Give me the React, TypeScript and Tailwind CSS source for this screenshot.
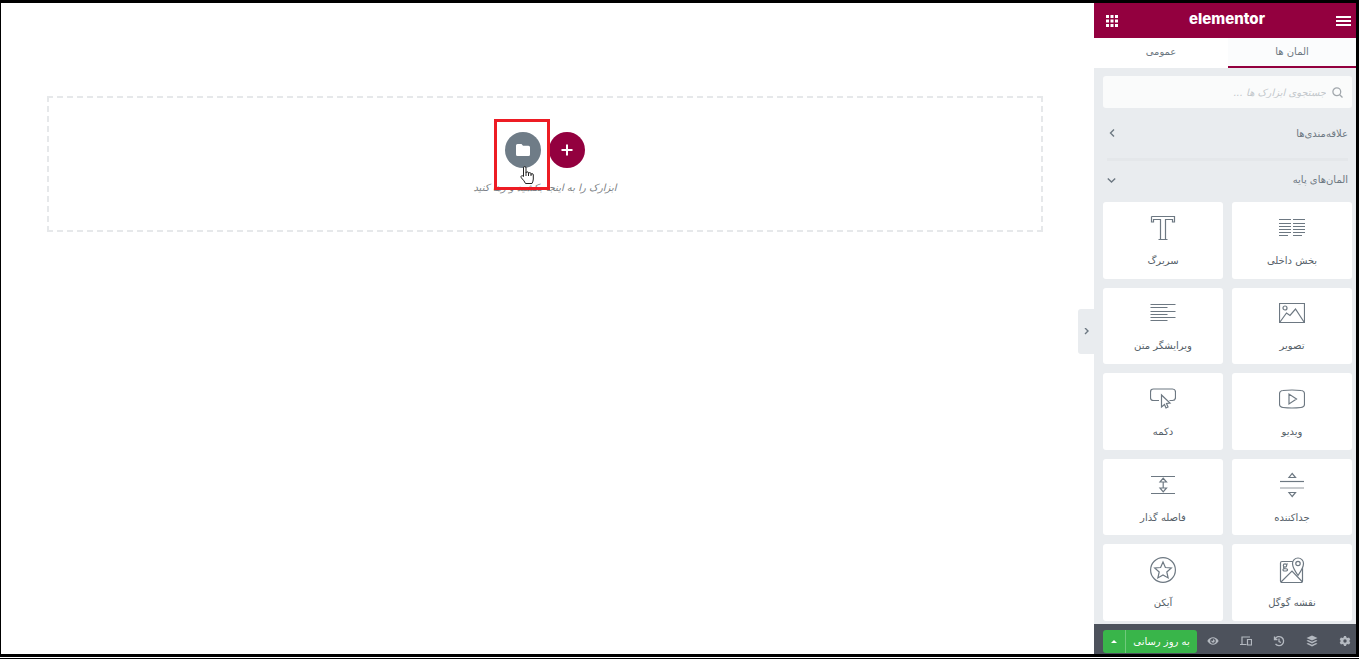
import React from 'react';

const widgets = [
  {
    title: 'بخش داخلی',
    icon: (
      <path d="M0 4.500h12M0 8.500h12M0 11.500h12M0 14.500h12M0 17.500h12M0 20.500h9M14 4.500h12M14 8.500h12M14 11.500h12M14 14.500h12M14 17.500h12M14 20.500h9" />
    ),
  },
  {
    title: 'سربرگ',
    icon: <path d="M1.500 1.500h23v5.500h-2V4.500h-7v20M1.500 1.500v5.500h2V4.500h7v20M8.500 24.500h9" />,
  },
  {
    title: 'تصویر',
    icon: (
      <>
        <path d="M.5 3.500h25v19H.5zM1 22l6.500-9 3.500 2.500 5.500-6.500L25 22" />
        <circle cx="6" cy="8" r="2" />
      </>
    ),
  },
  {
    title: 'ویرایشگر متن',
    icon: <path d="M.5 4.500h25M.5 7.500h17M.5 11.500h25M.5 14.500h17M.5 17.500h25M.5 20.500h17" />,
  },
  {
    title: 'ویدیو',
    icon: (
      <path d="M4 4.500q9-1 18 0q3.500.3 3.500 3.500v10q0 3.200-3.500 3.500q-9 1-18 0q-3.500-.3-3.500-3.500V8q0-3.200 3.500-3.500zM10 8v10l7.500-5z" />
    ),
  },
  {
    title: 'دکمه',
    icon: (
      <>
        <path d="M9 14.500H3.500Q.5 14.500.5 11.500V6q0-3 3-3h19q3 0 3 3v5.500q0 3-3 3h-3" />
        <path d="M11.500 9v12l3-2.500 1.500 3.500 2-1-1.500-3.500 3.500-.5z" />
      </>
    ),
  },
  {
    title: 'جداکننده',
    icon: (
      <>
        <path d="M1 9.500h24" />
        <path d="M1 16h24" stroke="#c8cbce" strokeWidth="2" />
        <path d="M10 5.500h6.500L13.200 1.500zM10 20.500h6.500l-3.300 4z" />
      </>
    ),
  },
  {
    title: 'فاصله گذار',
    icon: <path d="M1 4.500h24M1 21.500h24M10 10h6.500l-3.300-3.800zM10 16h6.500l-3.300 3.800zM13.200 10v6" />,
  },
  {
    title: 'نقشه گوگل',
    icon: (
      <>
        <rect x="1.500" y="4.500" width="22" height="21" rx="1.500" />
        <path d="M2 25L13 14l10.500 11" />
        <path d="M19 18.500Q13.500 10.500 13.500 6.500a5.500 5.500 0 0 1 11 0q0 4-5.500 12z" fill="#fff" />
        <circle cx="19" cy="6.500" r="2.200" />
        <circle cx="6" cy="8.500" r="1.700" />
        <path d="M7.500 7h1.500M5 10q-1 1 .5 1.500 3 0 3 1.300T6 14q-2.200 0-2-1.300.2-1 1.500-1.200" />
      </>
    ),
  },
  {
    title: 'آیکن',
    icon: (
      <>
        <circle cx="13" cy="13" r="12.400" />
        <path d="M13 5l2.400 5.500 5.900.5-4.500 4 1.300 5.900-5.100-3-5.100 3 1.300-5.900-4.500-4 5.900-.5z" />
      </>
    ),
  },
];

const tools = [
  {
    label: 'تنظیمات',
    icon: (
      <path
        fillRule="evenodd"
        d="M5 1h2l.4 1.500 1.200.6L10 2.500l1.300 1.700-.8 1.200v1.200l.8 1.200L10 9.500l-1.400-.6-1.200.6L7 11H5l-.4-1.500-1.200-.6L2 9.500.7 7.800l.8-1.200V5.400L.7 4.200 2 2.500l1.400.6 1.200-.6zM6 4.300a1.700 1.700 0 1 0 0 3.400 1.700 1.700 0 0 0 0-3.400z"
      />
    ),
  },
  {
    label: 'ناوبری',
    icon: (
      <>
        <path d="M6 .5L11.500 3 6 5.500.5 3z" />
        <path d="M2 5l4 1.800L10 5l1.500.8L6 8.500.5 5.800zM2 8l4 1.800L10 8l1.500.8L6 11.500.5 8.800z" />
      </>
    ),
  },
  {
    label: 'تاریخچه',
    icon: (
      <path
        fill="none"
        stroke="currentColor"
        strokeWidth="1.300"
        d="M1.500 1.500v3h3M2 4.200A4.500 4.500 0 1 1 2.500 8.800M6 3.500v3l2 1"
      />
    ),
  },
  {
    label: 'حالت واکنش‌گرا',
    icon: (
      <path
        fill="none"
        stroke="currentColor"
        strokeWidth="1.200"
        d="M10 2H2v7M0 9.500h6.500M7.500 4.500h4v5.500h-4z"
      />
    ),
  },
  {
    label: 'پیش‌نمایش',
    icon: (
      <path
        fillRule="evenodd"
        d="M6 2.300Q9.500 2.300 11.700 6 9.500 9.700 6 9.700T.3 6Q2.500 2.300 6 2.300zM6 3.200a2.800 2.800 0 1 0 0 5.600 2.800 2.800 0 0 0 0-5.600zM6 4.300a1.700 1.700 0 1 1 0 3.400 1.700 1.700 0 0 1-1.600-2.100L6 6z"
      />
    ),
  },
];

const Header: React.FC = () => (
  <header className="flex h-[35px] items-center justify-between bg-[#93003f] pl-3 pr-1 text-white">
    <button aria-label="منو">
      <svg className="block h-3 w-4" viewBox="0 0 16 12" fill="currentColor">
        <path d="M0 1h15v2H0zM0 5h15v2H0zM0 9h15v2H0z" />
      </svg>
    </button>
    <span className="pb-1 font-['Inter',sans-serif] text-[15px] font-extrabold leading-5" dir="ltr">elementor</span>
    <button aria-label="ابزارک‌ها">
      <svg className="block size-3" viewBox="0 0 12 12" fill="currentColor">
        <path d="M0 0h3v3H0zM4.500 0h3v3h-3zM9 0h3v3H9zM0 4.500h3v3H0zM4.500 4.500h3v3h-3zM9 4.500h3v3H9zM0 9h3v3H0zM4.500 9h3v3h-3zM9 9h3v3H9z" />
      </svg>
    </button>
  </header>
);

const Panel: React.FC = () => (
  <aside className="relative flex w-[262px] shrink-0 flex-col bg-[#e9ecef] text-[10px] text-[#6d7882]">
    <Header />
    <nav className="flex h-[30px] bg-white">
      <button className="w-32 border-b-2 border-[#93003f] bg-[#fbfcfd] pb-0.5">المان ها</button>
      <button className="flex-1 border-b-2 border-white pb-0.5">عمومی</button>
    </nav>

    <div className="flex flex-1 flex-col pb-[3px] pl-[9px] pr-1 pt-2">
      <label className="flex h-8 items-center gap-1.5 rounded-[3px] bg-[#fafbfb] px-[9px]">
        <svg className="size-[11px] shrink-0" viewBox="0 0 11 11" fill="none" stroke="#a2a8ad" strokeWidth="1.300">
          <circle cx="4.800" cy="4.800" r="3.900" />
          <path d="M7.700 7.700l2.800 2.800" />
        </svg>
        <input
          type="text"
          aria-label="جستجو"
          placeholder="جستجوی ابزارک ها ..."
          className="w-full min-w-0 bg-transparent italic outline-none placeholder:text-[#c3c8cc]"
        />
      </label>

      <button className="mx-1 flex h-[50px] items-center justify-between">
        <span>علاقه‌مندی‌ها</span>
        <svg className="h-2 w-[9px]" viewBox="0 0 9 8" fill="none" stroke="currentColor" strokeWidth="1.400">
          <path d="M7 .5L3.500 4 7 7.500" />
        </svg>
      </button>
      <div className="mx-1 h-[3px] bg-[#e4e7ea]" />
      <button className="mx-1 mb-1 flex h-[37px] items-center justify-between">
        <span>المان‌های پایه</span>
        <svg className="h-2 w-[9px]" viewBox="0 0 9 8" fill="none" stroke="currentColor" strokeWidth="1.400">
          <path d="M.8 2.500L4.500 6l3.700-3.500" />
        </svg>
      </button>

      <div className="grid flex-1 grid-cols-2 grid-rows-5 gap-[9px]">
        {widgets.map(widget => (
          <button key={widget.title} className="flex flex-col items-center justify-center gap-3 rounded-[3px] bg-white pt-[3px]">
            <svg className="size-[26px]" viewBox="0 0 26 26" fill="none" stroke="#6d7882" strokeWidth="1.200">
              {widget.icon}
            </svg>
            <span className="leading-4 text-[#556068]">{widget.title}</span>
          </button>
        ))}
      </div>
    </div>

    <footer className="flex h-[30px] items-center justify-between bg-[#4d525c] pl-[9px] pr-[5px] pt-1 text-[#b4b9c0]">
      <div className="flex gap-[21px]">
        {tools.map(tool => (
          <button key={tool.label} aria-label={tool.label}>
            <svg className="block size-3" viewBox="0 0 12 12" fill="currentColor">
              {tool.icon}
            </svg>
          </button>
        ))}
      </div>
      <div className="flex h-[23px] overflow-hidden rounded-[3px] bg-[#39b54a] text-white">
        <button className="w-[71px]">به روز رسانی</button>
        <button aria-label="گزینه‌های ذخیره" className="flex w-[23px] items-center justify-center border-r border-[#70c97c]">
          <svg className="h-[3px] w-[6px]" viewBox="0 0 6 3" fill="currentColor">
            <path d="M0 3l3-3 3 3z" />
          </svg>
        </button>
      </div>
    </footer>

    <button
      aria-label="بستن پنل"
      className="absolute right-full top-[306px] flex h-[45px] w-4 items-center justify-center rounded-l-[3px] bg-[#e9ecef]"
    >
      <svg className="h-2 w-[6px]" viewBox="0 0 6 8" fill="none" stroke="currentColor" strokeWidth="1.400">
        <path d="M2 0l3 3-3 3" />
      </svg>
    </button>
  </aside>
);

const Canvas: React.FC = () => (
  <main className="flex-1 bg-white pl-[46px] pr-[51px] pt-[93px]">
    <section className="flex h-[136px] flex-col items-center border-2 border-dashed border-[#e6e8ea] pt-[34px]">
      <div className="flex gap-2">
        <button aria-label="افزودن بخش" className="flex size-9 items-center justify-center rounded-full bg-[#93003f] text-white">
          <svg className="size-3" viewBox="0 0 12 12" stroke="currentColor" strokeWidth="2">
            <path d="M6 .5v11M.5 6h11" />
          </svg>
        </button>
        <div className="relative">
          <button aria-label="افزودن قالب" className="flex size-9 items-center justify-center rounded-full bg-[#6f7c87] text-white">
            <svg className="h-3 w-[14px]" viewBox="0 0 14 12" fill="currentColor">
              <path d="M1.500 0h4L7 1.800h5.500Q14 1.800 14 3.300v7.200q0 1.500-1.500 1.500h-11Q0 12 0 10.500v-9Q0 0 1.500 0z" />
            </svg>
          </button>
          <div className="pointer-events-none absolute -left-[11px] -top-[13px] z-10 h-[71px] w-14 border-[3px] border-[#ed1c24]" />
          <svg className="pointer-events-none absolute left-[15px] top-[34px] z-10 h-[18px] w-[14px]" viewBox="0 0 14 18" fill="#fff" stroke="#222" strokeWidth="1">
            <path d="M3.500 10.500V2q0-1.500 1.200-1.500T6 2v5q0-1.200 1.200-1.200T8.500 7v.8q0-1.200 1.200-1.200T11 7.800v.9q0-1.100 1.100-1.100T13.300 9v4q0 2-1.300 4.500H5.500Q4.500 15 1.300 11.800.5 10.500 1.500 9.800q1-.4 2 .7zM6 7v3M8.500 7.800V10M11 8.700V10" />
          </svg>
        </div>
      </div>
      <p className="mt-3 text-[10px] italic leading-4 text-[#7a7f84]">ابزارک را به اینجا بکشید و رها کنید</p>
    </section>
  </main>
);

const App: React.FC = () => {
  return (
    <div dir="rtl" className="flex min-h-screen flex-col bg-black pt-[3px] font-['DejaVu_Sans',sans-serif]">
      <div className="flex flex-1 pl-px pr-[3px]">
        <Panel />
        <Canvas />
      </div>
      <div className="mb-px mt-[3px] h-px bg-white" />
    </div>
  );
};

export default App;
